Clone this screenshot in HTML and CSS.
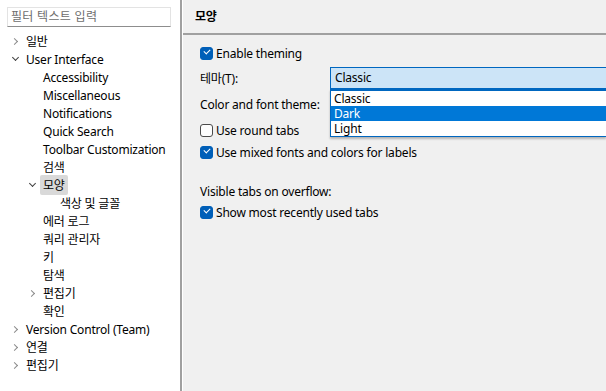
FILE: index.html
```html
<!DOCTYPE html>
<html lang="ko">
<head>
    <meta charset="UTF-8">
    <title>환경 설정 - 모양</title>
    <link rel="stylesheet" href="styles.css">
</head>
<body>
    <div class="window">
        <div class="sidebar">
            <div class="filter">필터 텍스트 입력</div>
            <ul class="tree">
                <li class="row lvl0"><span class="twisty closed"></span>일반</li>
                <li class="row lvl0"><span class="twisty open"></span>User Interface</li>
                <li class="row lvl1"><span class="twisty"></span>Accessibility</li>
                <li class="row lvl1"><span class="twisty"></span>Miscellaneous</li>
                <li class="row lvl1"><span class="twisty"></span>Notifications</li>
                <li class="row lvl1"><span class="twisty"></span>Quick Search</li>
                <li class="row lvl1"><span class="twisty"></span>Toolbar Customization</li>
                <li class="row lvl1"><span class="twisty"></span>검색</li>
                <li class="row lvl1"><span class="twisty open"></span><span class="selected">모양</span></li>
                <li class="row lvl2"><span class="twisty"></span>색상 및 글꼴</li>
                <li class="row lvl1"><span class="twisty"></span>에러 로그</li>
                <li class="row lvl1"><span class="twisty"></span>쿼리 관리자</li>
                <li class="row lvl1"><span class="twisty"></span>키</li>
                <li class="row lvl1"><span class="twisty"></span>탐색</li>
                <li class="row lvl1"><span class="twisty closed"></span>편집기</li>
                <li class="row lvl1"><span class="twisty"></span>확인</li>
                <li class="row lvl0"><span class="twisty closed"></span>Version Control (Team)</li>
                <li class="row lvl0"><span class="twisty closed"></span>연결</li>
                <li class="row lvl0"><span class="twisty closed"></span>편집기</li>
            </ul>
        </div>

        <div class="page">
            <div class="page-title">모양</div>
            <div class="page-body">
                <label class="check on">Enable theming</label>
                <div class="field">
                    <span class="field-label">테마(T):</span>
                    <div class="combo">
                        <div class="combo-value">Classic</div>
                        <ul class="combo-list">
                            <li>Classic</li>
                            <li class="active">Dark</li>
                            <li>Light</li>
                        </ul>
                    </div>
                </div>
                <div class="plain-label">Color and font theme:</div>
                <label class="check round">Use round tabs</label>
                <label class="check on">Use mixed fonts and colors for labels</label>

                <div class="group-label">Visible tabs on overflow:</div>
                <label class="check on">Show most recently used tabs</label>
            </div>
        </div>
    </div>
</body>
</html>
```

FILE: styles.css
```css
body {
    margin: 0;
    padding: 0;
    font-family: 'Noto Sans', 'Noto Sans CJK KR', sans-serif;
    font-size: 12px;
    letter-spacing: -0.2px;
    color: #000;
    overflow: hidden;
}
.window {
    display: flex;
    width: 606px;
    height: 391px;
}
.sidebar {
    width: 182px;
    flex-shrink: 0;
    background: #fff;
    border-right: 2px solid #a0a0a0;
    padding-top: 7px;
    box-sizing: border-box;
}
.filter {
    margin-left: 7px;
    width: 164px;
    height: 20px;
    box-sizing: border-box;
    border: 1px solid #e3e3e3;
    border-bottom-color: #8d8d8d;
    color: #6d6d6d;
    padding: 1px 0 0 3px;
    line-height: 16px;
    letter-spacing: 0.3px;
}
.tree {
    list-style: none;
    margin: 5px 0 0 0;
    padding: 0;
}
.row {
    display: flex;
    align-items: center;
    height: 18px;
    white-space: nowrap;
}
.lvl0 { padding-left: 9px; }
.lvl1 { padding-left: 26px; }
.lvl2 { padding-left: 43px; }
.twisty {
    width: 17px;
    height: 18px;
    flex-shrink: 0;
    position: relative;
}
.twisty.closed::before,
.twisty.open::before {
    content: '';
    position: absolute;
    width: 4px;
    height: 4px;
    border-right: 1.3px solid #8a8a8a;
    border-bottom: 1.3px solid #8a8a8a;
}
.twisty.closed::before {
    left: 3px;
    top: 7px;
    transform: rotate(-45deg);
}
.twisty.open::before {
    left: 4px;
    top: 5px;
    transform: rotate(45deg);
    border-color: #404040;
}
.selected {
    background: #d9d9d9;
    padding: 1px 3px;
    margin-left: -3px;
    border-radius: 2px;
}
.page {
    flex: 1;
    background: #f0f0f0;
    border-left: 1px solid #fff;
}
.page-title {
    height: 33px;
    line-height: 34px;
    padding-left: 12px;
    font-weight: bold;
    border-bottom: 2px solid #a0a0a0;
}
.page-body {
    padding: 7px 0 0 17px;
    display: flex;
    flex-direction: column;
}
.check {
    align-self: flex-start;
    display: flex;
    align-items: center;
    height: 20px;
    position: relative;
    padding-left: 16px;
}
.check:first-child {
    height: 22px;
}
.check.round {
    height: 24px;
}
.check::before {
    content: '';
    position: absolute;
    left: 0;
    top: 50%;
    margin-top: -6px;
    width: 11px;
    height: 11px;
    border: 1px solid #4a4a4a;
    border-radius: 3px;
    background: #fdfdfd;
}
.check.on::before {
    border-color: #005fb8;
    background: #005fb8;
}
.check.on::after {
    content: '';
    position: absolute;
    left: 4px;
    top: 50%;
    margin-top: -4px;
    width: 5px;
    height: 3px;
    border-left: 1px solid #fff;
    border-bottom: 1px solid #fff;
    transform: rotate(-45deg);
}
.field {
    display: flex;
    align-items: center;
    height: 28px;
}
.field-label {
    width: 130px;
}
.plain-label {
    align-self: flex-start;
    height: 26px;
    line-height: 26px;
}
.combo {
    flex: 1;
    height: 22px;
    position: relative;
}
.combo-value {
    height: 22px;
    box-sizing: border-box;
    border: 1px solid #0067c0;
    border-right: none;
    background: #cce4f7;
    padding-left: 4px;
    line-height: 20px;
}
.combo-list {
    list-style: none;
    margin: 0;
    padding: 0;
    position: absolute;
    left: 0;
    right: 0;
    top: 22px;
    background: #fff;
    border: 1px solid #0067c0;
    border-top-width: 2px;
    border-right: none;
    box-shadow: 0 2px 2px rgba(0, 0, 0, 0.25);
    z-index: 2;
}
.combo-list li {
    height: 15px;
    line-height: 15px;
    padding-left: 3px;
}
.combo-list li.active {
    background: #0078d7;
    color: #fff;
}
.group-label {
    align-self: flex-start;
    margin-top: 20px;
    height: 20px;
    line-height: 20px;
}
```
